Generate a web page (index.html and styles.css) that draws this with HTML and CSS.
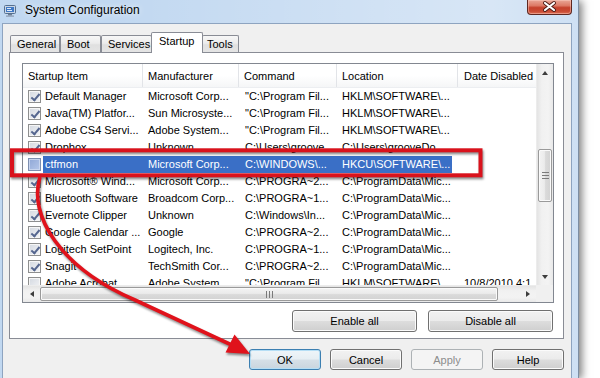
FILE: index.html
```html
<!DOCTYPE html>
<html>
<head>
<meta charset="utf-8">
<title>System Configuration</title>
<link rel="stylesheet" href="styles.css">
</head>
<body>
<div class="window">
  <div class="titlebar">
    <svg class="app-icon" width="13" height="12" viewBox="0 0 13 12">
      <rect x="0.5" y="0.5" width="11" height="8" rx="1" fill="#c9d6e6" stroke="#56708f"/>
      <rect x="2" y="2" width="8" height="5" fill="#3f78c4"/>
      <rect x="3" y="3" width="4" height="1" fill="#dfeaf7"/>
      <rect x="3" y="5" width="5" height="1" fill="#dfeaf7"/>
      <rect x="4" y="9" width="4" height="1.5" fill="#6d7f95"/>
      <rect x="2" y="10.5" width="8" height="1.2" fill="#8a9ab0"/>
    </svg>
    <span class="title">System Configuration</span>
    <div class="close-btn">
      <svg width="45" height="15" viewBox="0 0 45 15">
        <path d="M18 3 L27 10 M27 3 L18 10" stroke="#4a1a14" stroke-width="4" stroke-linecap="round"/>
        <path d="M18 3 L27 10 M27 3 L18 10" stroke="#ffffff" stroke-width="2.2" stroke-linecap="round"/>
      </svg>
    </div>
  </div>
  <div class="client">
    <div class="tabs">
      <div class="tab tab-general">General</div>
      <div class="tab tab-boot">Boot</div>
      <div class="tab tab-services">Services</div>
      <div class="tab active">Startup</div>
      <div class="tab tab-tools">Tools</div>
    </div>
    <div class="panel">
      <div class="listbox">
        <div class="list-main">
          <div class="row header">
            <div class="hcell">Startup Item</div>
            <div class="hcell">Manufacturer</div>
            <div class="hcell">Command</div>
            <div class="hcell">Location</div>
            <div class="hcell">Date Disabled</div>
          </div>
          <div class="row">
            <div class="cell first"><span class="cb on"></span><span class="label">Default Manager</span></div>
            <div class="cell">Microsoft Corp...</div><div class="cell c3">"C:\Program Fil...</div><div class="cell">HKLM\SOFTWARE\...</div><div class="cell c5"></div>
          </div>
          <div class="row">
            <div class="cell first"><span class="cb on"></span><span class="label">Java(TM) Platfor...</span></div>
            <div class="cell">Sun Microsyste...</div><div class="cell c3">"C:\Program Fil...</div><div class="cell">HKLM\SOFTWARE\...</div><div class="cell c5"></div>
          </div>
          <div class="row">
            <div class="cell first"><span class="cb on"></span><span class="label">Adobe CS4 Servi...</span></div>
            <div class="cell">Adobe System...</div><div class="cell c3">"C:\Program Fil...</div><div class="cell">HKLM\SOFTWARE\...</div><div class="cell c5"></div>
          </div>
          <div class="row">
            <div class="cell first"><span class="cb on"></span><span class="label">Dropbox</span></div>
            <div class="cell">Unknown</div><div class="cell c3">C:\Users\groove...</div><div class="cell">C:\Users\grooveDo...</div><div class="cell c5"></div>
          </div>
          <div class="row selected">
            <div class="cell first"><span class="cb hot"></span><span class="label">ctfmon</span></div>
            <div class="cell">Microsoft Corp...</div><div class="cell c3">C:\WINDOWS\...</div><div class="cell c4">HKCU\SOFTWARE\...</div><div class="cell c5"></div>
          </div>
          <div class="row">
            <div class="cell first"><span class="cb on"></span><span class="label">Microsoft® Wind...</span></div>
            <div class="cell">Microsoft Corp...</div><div class="cell c3">C:\PROGRA~2...</div><div class="cell">C:\ProgramData\Mic...</div><div class="cell c5"></div>
          </div>
          <div class="row">
            <div class="cell first"><span class="cb on"></span><span class="label">Bluetooth Software</span></div>
            <div class="cell">Broadcom Corp...</div><div class="cell c3">C:\PROGRA~1...</div><div class="cell">C:\ProgramData\Mic...</div><div class="cell c5"></div>
          </div>
          <div class="row">
            <div class="cell first"><span class="cb on"></span><span class="label">Evernote Clipper</span></div>
            <div class="cell">Unknown</div><div class="cell c3">C:\Windows\In...</div><div class="cell">C:\ProgramData\Mic...</div><div class="cell c5"></div>
          </div>
          <div class="row">
            <div class="cell first"><span class="cb on"></span><span class="label">Google Calendar ...</span></div>
            <div class="cell">Google</div><div class="cell c3">C:\PROGRA~2...</div><div class="cell">C:\ProgramData\Mic...</div><div class="cell c5"></div>
          </div>
          <div class="row">
            <div class="cell first"><span class="cb on"></span><span class="label">Logitech SetPoint</span></div>
            <div class="cell">Logitech, Inc.</div><div class="cell c3">C:\PROGRA~1...</div><div class="cell">C:\ProgramData\Mic...</div><div class="cell c5"></div>
          </div>
          <div class="row">
            <div class="cell first"><span class="cb on"></span><span class="label">Snagit</span></div>
            <div class="cell">TechSmith Cor...</div><div class="cell c3">C:\PROGRA~2...</div><div class="cell">C:\ProgramData\Mic...</div><div class="cell c5"></div>
          </div>
          <div class="row">
            <div class="cell first"><span class="cb"></span><span class="label">Adobe Acrobat</span></div>
            <div class="cell">Adobe System...</div><div class="cell c3">"C:\Program Fil...</div><div class="cell">HKLM\SOFTWARE\...</div><div class="cell c5">10/8/2010 4:1...</div>
          </div>
        </div>
        <div class="vscroll">
          <div class="sb-btn"><span class="arr up"></span></div>
          <div class="sb-track v">
            <div class="thumb vthumb"><span class="grip-v"></span></div>
          </div>
          <div class="sb-btn"><span class="arr down"></span></div>
        </div>
        <div class="hscroll">
          <div class="sb-btn"><span class="arr left"></span></div>
          <div class="sb-track h">
            <div class="thumb hthumb"><span class="grip-h"></span></div>
          </div>
          <div class="sb-btn"><span class="arr right"></span></div>
        </div>
        <div class="corner"></div>
      </div>
      <div class="panel-buttons">
        <button class="btn wide">Enable all</button>
        <button class="btn wide">Disable all</button>
      </div>
    </div>
    <div class="dialog-buttons">
      <button class="btn default">OK</button>
      <button class="btn">Cancel</button>
      <button class="btn disabled">Apply</button>
      <button class="btn">Help</button>
    </div>
  </div>
</div>
<svg class="annotation" width="600" height="378" viewBox="0 0 600 378">
  <g class="mark">
    <rect x="12" y="150.3" width="468.5" height="25" fill="none" stroke="#d9121c" stroke-width="4"/>
    <path d="M40 177 C28 215, 60 268, 135 300 L236 347" fill="none" stroke="#e0121b" stroke-width="3.6"/>
    <polygon points="250,354 225.5,352.5 234.5,334.5" fill="#e0121b"/>
  </g>
</svg>
</body>
</html>
```
FILE: styles.css
```css
* { box-sizing: border-box; }
html, body { margin: 0; padding: 0; }
body {
  width: 600px;
  height: 378px;
  overflow: hidden;
  position: relative;
  background: #ffffff;
  font-family: "Liberation Sans", Arial, sans-serif;
  font-size: 11px;
  color: #000;
}
.window {
  width: 579px;
  height: 378px;
  padding: 0 6px 0 2px;
  display: flex;
  flex-direction: column;
  background: linear-gradient(90deg, rgba(255,255,255,0.05) 20%, rgba(255,255,255,0.4) 85%, rgba(255,255,255,0.25) 100%), #bed6f0;
  border-right: 1px solid #7d8ea3;
  box-shadow: 3px 1px 8px rgba(0,0,0,0.5);
}
.titlebar {
  height: 23px;
  display: flex;
  align-items: flex-start;
  flex: none;
}
.app-icon { margin: 5px 0 0 2px; flex: none; }
.title {
  margin: 3px 0 0 8px;
  font-size: 12px;
  color: #000;
  text-shadow: 0 0 6px rgba(255,255,255,0.9);
}
.close-btn {
  margin-left: auto;
  width: 45px;
  height: 15px;
  border: 1px solid #5e2720;
  border-top: none;
  border-radius: 0 0 4px 4px;
  background: linear-gradient(#e9a797 0%, #dd7a66 40%, #c5412c 55%, #c94a33 80%, #dc7055 100%);
  box-shadow: inset 0 0 0 1px rgba(255,210,200,0.45);
  position: relative;
}
.close-btn svg { position: absolute; left: -1px; top: 0; }
.client {
  flex: 1;
  background: #f0f0f0;
  border: 1px solid #8ea4c0;
  border-bottom: none;
  padding: 8px 7px 0 6px;
  display: flex;
  flex-direction: column;
}
.tabs {
  height: 20px;
  display: flex;
  align-items: flex-end;
  padding-left: 1px;
  position: relative;
  z-index: 1;
  flex: none;
}
.tab {
  height: 17px;
  padding: 0 0 0 6px;
  border: 1px solid #898c95;
  border-bottom: none;
  border-radius: 2px 2px 0 0;
  background: linear-gradient(#f7f7f7, #ececec 45%, #e0e0e0 55%, #e4e4e4);
  display: flex;
  align-items: center;
  line-height: 1;
  white-space: nowrap;
}
.tab-general { width: 50px; }
.tab-boot { width: 41px; }
.tab-services { width: 51px; }
.tab-tools { width: 37px; padding-left: 4px; }
.tab.active {
  width: 52px;
  height: 21px;
  margin: 0 -1px -1px -1px;
  padding: 0 0 3px 7px;
  background: #ffffff;
  position: relative;
  z-index: 2;
}
.panel {
  flex: none;
  border: 1px solid #898c95;
  background: #ffffff;
  padding: 10px 9px 6px 12px;
}
.listbox {
  width: 532px;
  height: 240px;
  border: 1px solid #828790;
  display: grid;
  grid-template-columns: 513px 17px;
  grid-template-rows: 221px 17px;
  background: #fff;
}
.list-main { overflow: hidden; }
.row {
  display: grid;
  grid-template-columns: 120px 96px 98px 121px 120px;
  height: 17px;
  align-items: center;
  white-space: nowrap;
}
.row.header {
  height: 24px;
  background: linear-gradient(#ffffff 0%, #ffffff 50%, #f5f6f7 100%);
  border-bottom: 1px solid #eceef1;
  align-items: stretch;
}
.hcell {
  padding: 0 0 0 5px;
  border-right: 1px solid #e2e4e8;
  display: flex;
  align-items: center;
  overflow: hidden;
}
.hcell:last-child { padding-left: 6px; }
.cell {
  padding-left: 5px;
  overflow: hidden;
  height: 17px;
  line-height: 17px;
}
.cell.c3, .cell.c5 { padding-left: 6px; }
.cell.first {
  display: flex;
  align-items: center;
}
.label {
  margin-left: 2px;
  padding-left: 2px;
  flex: 1;
  height: 17px;
  line-height: 17px;
  overflow: hidden;
}
.cb {
  width: 13px;
  height: 13px;
  flex: none;
  border: 1px solid #8e8f8f;
  background: linear-gradient(135deg, #d3d8e0, #f4f5f7);
  box-shadow: inset 0 0 0 1px #f6f6f6;
  position: relative;
}
.cb.on::after {
  content: "";
  position: absolute;
  left: 3.5px;
  top: 0.5px;
  width: 3px;
  height: 7px;
  border-right: 2px solid #55668f;
  border-bottom: 2px solid #55668f;
  transform: rotate(40deg);
}
.cb.hot {
  background: linear-gradient(135deg, #8fa7d6, #b5c7ea);
  box-shadow: inset 0 0 0 1px #c8d5ee;
  border-color: #7d8fb0;
}
.row.selected .label,
.row.selected .cell:nth-child(2),
.row.selected .cell.c3 {
  background: #3a6fc6;
  color: #fff;
}
.row.selected .cell.c4 {
  color: #fff;
  background: linear-gradient(90deg, #3a6fc6 calc(100% - 6px), transparent calc(100% - 6px));
}
.vscroll {
  display: flex;
  flex-direction: column;
  background: linear-gradient(90deg, #e4e4e4, #f1f1f1 30%, #f3f3f3 70%, #e9e9e9);
  border-left: 1px solid #ececec;
}
.hscroll {
  display: flex;
  background: linear-gradient(#e4e4e4, #f1f1f1 30%, #f3f3f3 70%, #e9e9e9);
  border-top: 1px solid #ececec;
}
.corner { background: #f0f0f0; }
.sb-btn {
  width: 17px;
  height: 17px;
  flex: none;
  display: flex;
  align-items: center;
  justify-content: center;
}
.vscroll .sb-btn { width: 16px; }
.hscroll .sb-btn { height: 16px; }
.sb-track { flex: 1; display: flex; }
.sb-track.v { flex-direction: column; }
.thumb {
  border: 1px solid #9a9a9a;
  border-radius: 2px;
  display: flex;
  align-items: center;
  justify-content: center;
}
.vthumb {
  margin-top: 68px;
  height: 53px;
  margin-left: 1px;
  width: 14px;
  background: linear-gradient(90deg, #f3f3f3, #ebebeb 45%, #dadada 55%, #d2d2d2);
  box-shadow: inset 0 0 0 1px #fafafa;
}
.hthumb {
  width: 458px;
  height: 14px;
  margin-top: 1px;
  background: linear-gradient(#f3f3f3, #ebebeb 45%, #dadada 55%, #d2d2d2);
  box-shadow: inset 0 0 0 1px #fafafa;
}
.grip-v {
  width: 7px;
  height: 7px;
  background: repeating-linear-gradient(#7a7a7a 0 1px, transparent 1px 3px);
}
.grip-h {
  width: 7px;
  height: 7px;
  background: repeating-linear-gradient(90deg, #7a7a7a 0 1px, transparent 1px 3px);
}
.arr { width: 0; height: 0; display: block; }
.arr.up { border-left: 3.5px solid transparent; border-right: 3.5px solid transparent; border-bottom: 4px solid #3e3e3e; }
.arr.down { border-left: 3.5px solid transparent; border-right: 3.5px solid transparent; border-top: 4px solid #3e3e3e; }
.arr.left { border-top: 3.5px solid transparent; border-bottom: 3.5px solid transparent; border-right: 4px solid #3e3e3e; }
.arr.right { border-top: 3.5px solid transparent; border-bottom: 3.5px solid transparent; border-left: 4px solid #3e3e3e; }
.panel-buttons {
  display: flex;
  justify-content: flex-end;
  gap: 11px;
  margin-top: 7px;
  padding-right: 1px;
}
.btn {
  font-family: "Liberation Sans", Arial, sans-serif;
  font-size: 11px;
  color: #000;
  width: 72px;
  height: 21px;
  padding: 0;
  border: 1px solid #707070;
  border-radius: 3px;
  background: linear-gradient(#f2f2f2 0%, #ebebeb 49%, #dddddd 51%, #cfcfcf 100%);
  box-shadow: inset 0 0 0 1px #fbfbfb;
}
.btn.wide { width: 125px; height: 22px; }
.btn.default {
  border-color: #3c7fb1;
  box-shadow: inset 0 0 0 1px #b5def5;
  background: linear-gradient(#eef5f9 0%, #e6eef3 49%, #d6e0e7 51%, #c9d5de 100%);
}
.btn.disabled {
  border-color: #adb2b5;
  background: #f4f4f4;
  color: #8d8d8d;
  box-shadow: none;
}
.dialog-buttons {
  display: flex;
  justify-content: flex-end;
  gap: 9px;
  margin-top: 10px;
}
.annotation {
  position: absolute;
  left: 0;
  top: 0;
  pointer-events: none;
}
.mark { filter: drop-shadow(1px 2px 1.2px rgba(0,0,0,0.45)); }
```
